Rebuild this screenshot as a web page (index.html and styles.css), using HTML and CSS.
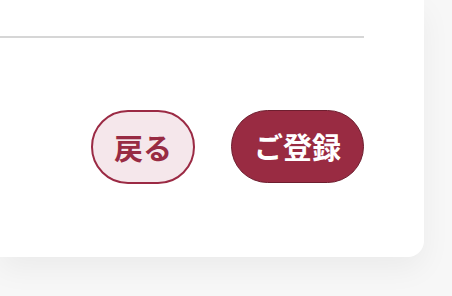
FILE: index.html
```html
<!DOCTYPE html>
<html lang="ja">
<head>
<meta charset="utf-8">
<link rel="stylesheet" href="styles.css">
</head>
<body>
<div class="card">
  <div class="divider"></div>
  <div class="actions">
    <button class="btn btn-back">戻る</button>
    <button class="btn btn-submit">ご登録</button>
  </div>
</div>
</body>
</html>
```
FILE: styles.css
```css
html, body {
  margin: 0;
  padding: 0;
}
body {
  width: 452px;
  height: 296px;
  overflow: hidden;
  background: #f7f7f7;
  font-family: "Noto Sans CJK JP", "Noto Sans", sans-serif;
}
.card {
  width: 424px;
  height: 257px;
  box-sizing: border-box;
  padding-right: 60px;
  padding-top: 36px;
  background: #ffffff;
  border-radius: 0 0 16px 0;
  box-shadow: 0 12px 30px rgba(0, 0, 0, 0.05);
}
.divider {
  height: 2px;
  background: #d6d6d6;
}
.actions {
  display: flex;
  justify-content: flex-end;
  gap: 36px;
  margin-top: 72px;
}
.btn {
  height: 74px;
  box-sizing: border-box;
  border-radius: 37px;
  padding: 0;
  font-family: "Noto Sans CJK JP", "Noto Sans", sans-serif;
  font-size: 29px;
  font-weight: 700;
  line-height: 1;
  display: flex;
  align-items: center;
  justify-content: center;
}
.btn-back {
  width: 104px;
  background: #f5e7eb;
  color: #982b43;
  border: 2px solid #9b2a44;
}
.btn-submit {
  width: 133px;
  height: 73px;
  background: #992b42;
  color: #ffffff;
  border: 1px solid #6e1e2f;
}
```
